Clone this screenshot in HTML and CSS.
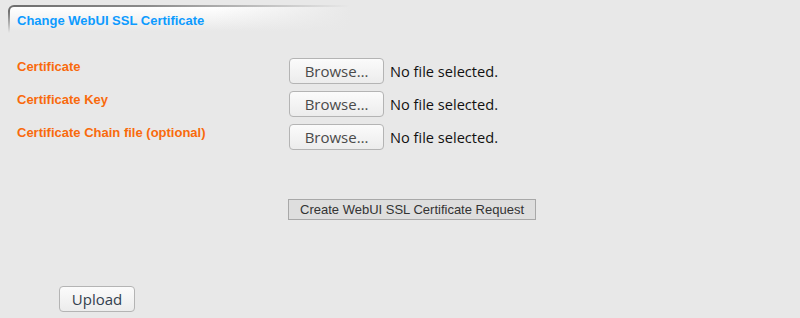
FILE: index.html
```html
<!DOCTYPE html>
<html>
<head>
<meta charset="utf-8">
<link rel="stylesheet" href="styles.css">
</head>
<body>
<div class="tab"><span class="tab-title">Change WebUI SSL Certificate</span></div>
<div class="form">
  <div class="row">
    <label class="lbl">Certificate</label>
    <div class="file"><button class="browse">Browse…</button><span class="nofile">No file selected.</span></div>
  </div>
  <div class="row">
    <label class="lbl">Certificate Key</label>
    <div class="file"><button class="browse">Browse…</button><span class="nofile">No file selected.</span></div>
  </div>
  <div class="row">
    <label class="lbl">Certificate Chain file (optional)</label>
    <div class="file"><button class="browse">Browse…</button><span class="nofile">No file selected.</span></div>
  </div>
  <div class="create-wrap"><button class="create">Create WebUI SSL Certificate Request</button></div>
  <div class="upload-wrap"><button class="upload">Upload</button></div>
</div>
</body>
</html>
```
FILE: styles.css
```css
html, body {
  margin: 0;
  padding: 0;
  background: #e8e8e8;
  width: 800px;
  height: 318px;
  overflow: hidden;
}
.tab {
  margin: 5px 0 0 8px;
  width: 342px;
  height: 26px;
  box-sizing: border-box;
  padding: 4px 0 0 7px;
  border-top-left-radius: 6px;
  border-top: 2px solid transparent;
  border-left: 2px solid transparent;
  background:
    linear-gradient(to right, rgba(232,232,232,0) 60%, #e8e8e8 100%) padding-box,
    linear-gradient(to bottom, #ffffff 0%, #f4f4f4 50%, #e8e8e8 100%) padding-box,
    linear-gradient(to right, #6e6e6e 0%, #8a8a8a 40%, #e8e8e8 100%) border-box;
  position: relative;
}
.tab::after {
  content: "";
  position: absolute;
  left: -2px;
  top: 4px;
  width: 2px;
  height: 22px;
  background: linear-gradient(to bottom, #6e6e6e, #e8e8e8);
}
.tab-title {
  font-family: "Liberation Sans", Arial, sans-serif;
  font-weight: bold;
  font-size: 13px;
  color: #0d9bff;
}
.form {
  padding: 27px 0 0 17px;
}
.row {
  display: flex;
  align-items: center;
  height: 26px;
  margin-bottom: 7px;
}
.lbl {
  width: 272px;
  font-family: "Liberation Sans", Arial, sans-serif;
  font-weight: bold;
  font-size: 13px;
  color: #f96a0c;
  align-self: flex-start;
  padding-top: 1px;
}
.file {
  display: flex;
  align-items: center;
}
.browse {
  width: 95px;
  height: 26px;
  box-sizing: border-box;
  border: 1px solid #b4b4b4;
  border-radius: 4px;
  background: linear-gradient(to bottom, #fbfbfb, #ececec);
  font-family: "Open Sans", "DejaVu Sans", sans-serif;
  font-size: 15px;
  color: #4a4a4a;
  padding: 0;
  margin: 0;
}
.nofile {
  margin-left: 6px;
  font-family: "Open Sans", "DejaVu Sans", sans-serif;
  font-size: 14.6px;
  color: #111;
}
.create-wrap {
  padding: 42px 0 0 271px;
}
.create {
  width: 248px;
  height: 21px;
  box-sizing: border-box;
  border: 1px solid #a8a8a8;
  border-radius: 0;
  background: #dedede;
  font-family: "Liberation Sans", Arial, sans-serif;
  font-size: 13px;
  color: #333;
  padding: 0;
  margin: 0;
}
.upload-wrap {
  padding: 66px 0 0 42px;
}
.upload {
  width: 76px;
  height: 26px;
  box-sizing: border-box;
  border: 1px solid #b4b4b4;
  border-radius: 4px;
  background: linear-gradient(to bottom, #fbfbfb, #ececec);
  font-family: "Open Sans", "DejaVu Sans", sans-serif;
  font-size: 15px;
  color: #33404e;
  padding: 0;
  margin: 0;
}
```
